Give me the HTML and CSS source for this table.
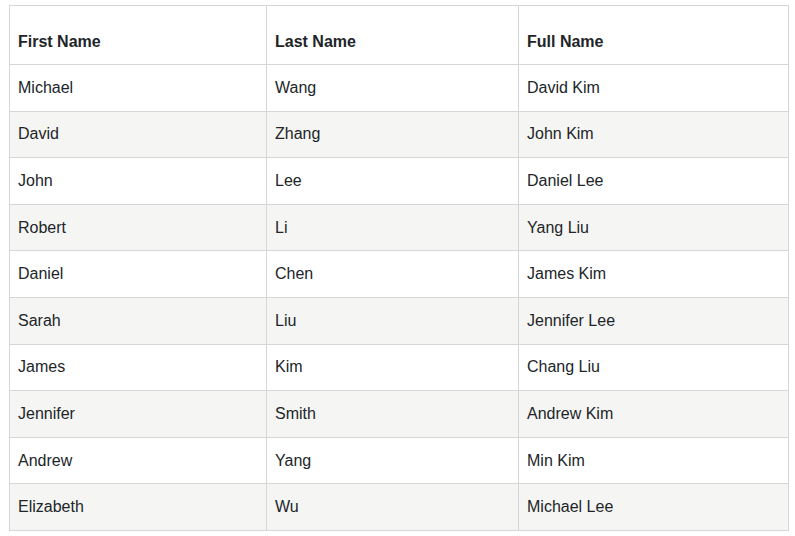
FILE: index.html
```html
<!DOCTYPE html>
<html>
<head>
<meta charset="utf-8">
<link rel="stylesheet" href="styles.css">
</head>
<body>
<table class="grid">
  <colgroup>
    <col class="c1"><col class="c2"><col class="c3">
  </colgroup>
  <thead>
    <tr><th>First Name</th><th>Last Name</th><th>Full Name</th></tr>
  </thead>
  <tbody>
    <tr><td>Michael</td><td>Wang</td><td>David Kim</td></tr>
    <tr><td>David</td><td>Zhang</td><td>John Kim</td></tr>
    <tr><td>John</td><td>Lee</td><td>Daniel Lee</td></tr>
    <tr><td>Robert</td><td>Li</td><td>Yang Liu</td></tr>
    <tr><td>Daniel</td><td>Chen</td><td>James Kim</td></tr>
    <tr><td>Sarah</td><td>Liu</td><td>Jennifer Lee</td></tr>
    <tr><td>James</td><td>Kim</td><td>Chang Liu</td></tr>
    <tr><td>Jennifer</td><td>Smith</td><td>Andrew Kim</td></tr>
    <tr><td>Andrew</td><td>Yang</td><td>Min Kim</td></tr>
    <tr><td>Elizabeth</td><td>Wu</td><td>Michael Lee</td></tr>
  </tbody>
</table>
</body>
</html>
```
FILE: styles.css
```css
html, body {
  margin: 0;
  padding: 0;
  background: #ffffff;
}
body {
  padding: 5px 0 0 9px;
  font-family: "Liberation Sans", Arial, sans-serif;
  font-size: 16px;
  color: #212529;
}
.grid {
  border-collapse: separate;
  border-spacing: 0;
  table-layout: fixed;
  width: 779px;
  border-top: 1px solid #d6d6d6;
  border-left: 1px solid #d6d6d6;
}
.c1 { width: 257px; }
.c2 { width: 252px; }
.c3 { width: 270px; }
.grid th, .grid td {
  border-right: 1px solid #d6d6d6;
  border-bottom: 1px solid #d6d6d6;
  padding: 0 8px;
  text-align: left;
  line-height: 24px;
}
.grid th {
  font-weight: bold;
  vertical-align: bottom;
  padding-bottom: 10px;
  box-sizing: border-box;
  height: 59px;
}
.grid td {
  height: 46.6px;
  box-sizing: border-box;
  vertical-align: middle;
}
.grid tbody tr:nth-child(even) td {
  background: #f5f5f3;
}
```
